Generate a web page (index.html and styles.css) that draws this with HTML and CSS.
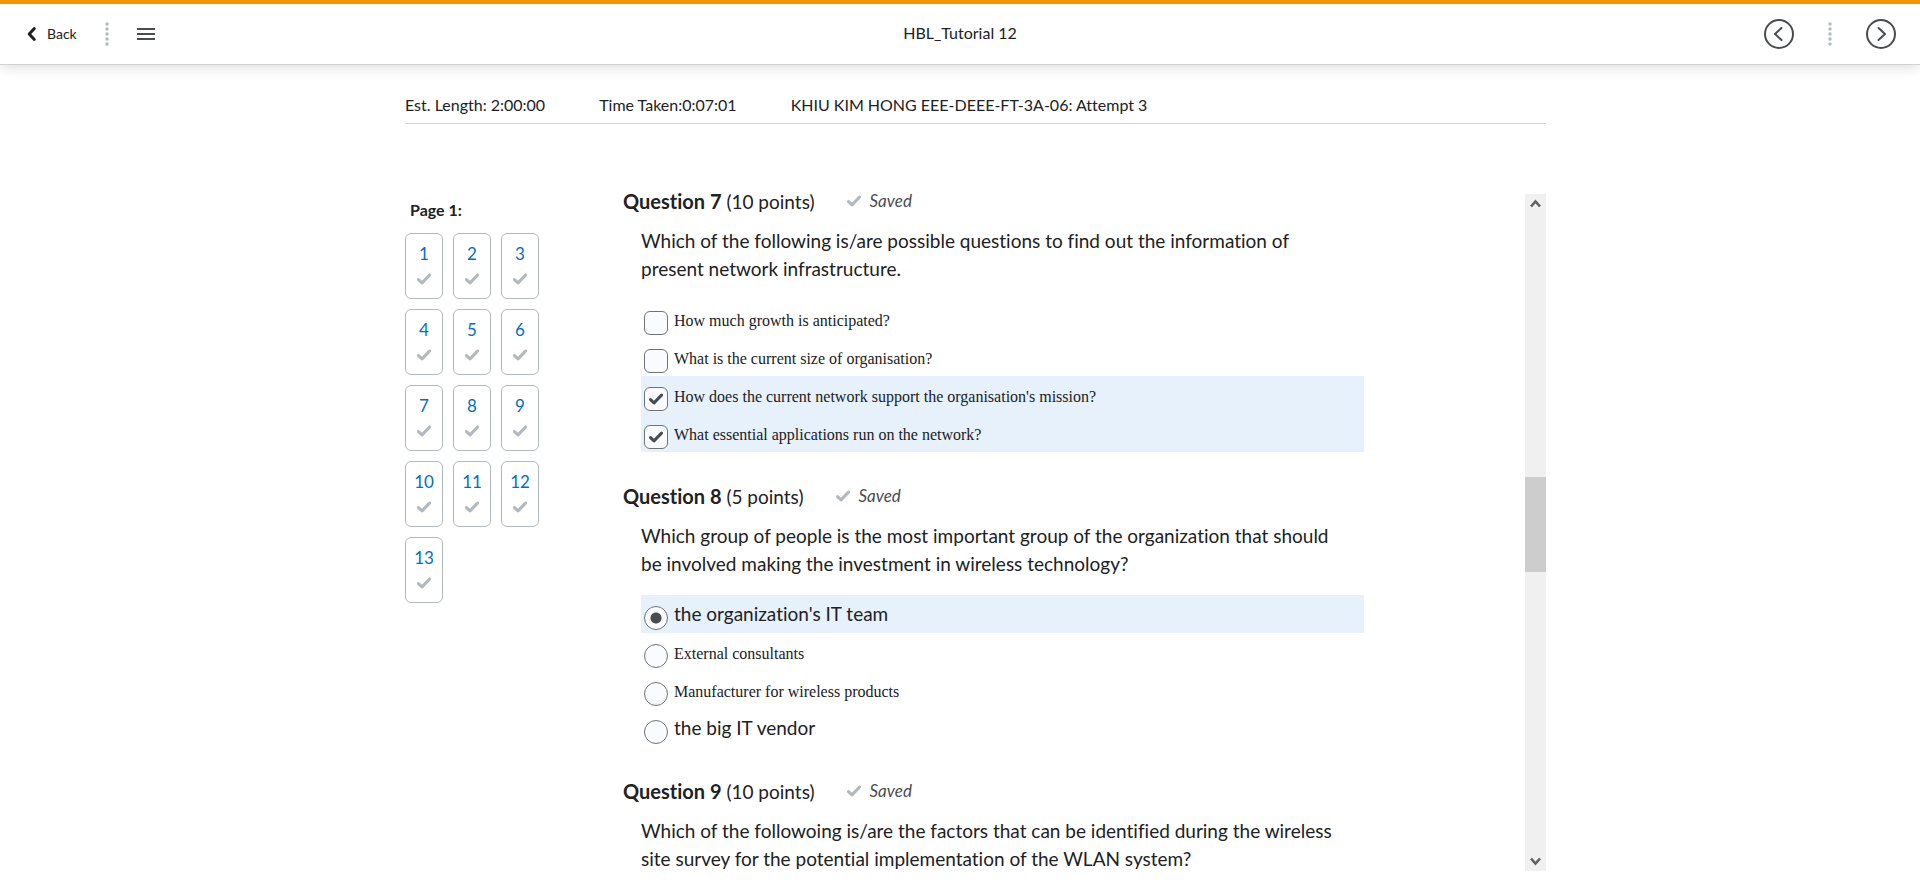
FILE: index.html
```
<!DOCTYPE html>
<html lang="en">
<head>
<meta charset="utf-8">
<title>HBL_Tutorial 12</title>
<link rel="stylesheet" href="styles.css">
</head>
<body>
<svg class="defs" aria-hidden="true">
  <symbol id="check" viewBox="0 0 14 12"><path d="M1.5 6.6 5 9.9 12.5 2.1" fill="none" stroke="currentColor" stroke-width="3" stroke-linecap="round" stroke-linejoin="round"/></symbol>
  <symbol id="dots" viewBox="0 0 4 24"><g fill="#b1b9be"><circle cx="2" cy="2" r="1.7"/><circle cx="2" cy="7" r="1.7"/><circle cx="2" cy="12" r="1.7"/><circle cx="2" cy="17" r="1.7"/><circle cx="2" cy="22" r="1.7"/></g></symbol>
</svg>
<header class="topbar">
  <div class="topbar-side">
    <a class="back" href="#"><svg width="10" height="16" viewBox="0 0 10 16"><path d="M7.300 2.500 2.200 8l5.100 5.500" fill="none" stroke="#202122" stroke-width="3" stroke-linecap="round" stroke-linejoin="round"/></svg>Back</a>
    <svg class="dots" width="4" height="24"><use href="#dots"/></svg>
    <button class="icon-button" type="button" aria-label="Menu"><svg width="18" height="18" viewBox="0 0 18 18"><path d="M0 4h18M0 9h18M0 14h18" stroke="#494c4e" stroke-width="2"/></svg></button>
  </div>
  <h1 class="title">HBL_Tutorial 12</h1>
  <div class="topbar-side topbar-right">
    <button class="icon-button" type="button" aria-label="Previous"><svg width="30" height="30" viewBox="0 0 30 30"><g fill="none" stroke="#494c4e" stroke-width="2" stroke-linecap="round" stroke-linejoin="round"><circle cx="15" cy="15" r="14"/><path d="M17.500 9 11 15l6.500 6"/></g></svg></button>
    <svg class="dots" width="4" height="24"><use href="#dots"/></svg>
    <button class="icon-button" type="button" aria-label="Next"><svg width="30" height="30" viewBox="0 0 30 30"><g fill="none" stroke="#494c4e" stroke-width="2" stroke-linecap="round" stroke-linejoin="round"><circle cx="15" cy="15" r="14"/><path d="M12.500 9 19 15l-6.500 6"/></g></svg></button>
  </div>
</header>
<main class="page">
  <div class="info"><span>Est. Length: 2:00:00</span><span>Time Taken:0:07:01</span><span>KHIU KIM HONG EEE-DEEE-FT-3A-06: Attempt 3</span></div>
  <div class="columns">
    <nav class="pager" aria-label="Questions">
      <h2 class="pager-title">Page 1:</h2>
      <div class="tiles">
        <a class="tile" href="#">1<svg class="check"><use href="#check"/></svg></a>
        <a class="tile" href="#">2<svg class="check"><use href="#check"/></svg></a>
        <a class="tile" href="#">3<svg class="check"><use href="#check"/></svg></a>
        <a class="tile" href="#">4<svg class="check"><use href="#check"/></svg></a>
        <a class="tile" href="#">5<svg class="check"><use href="#check"/></svg></a>
        <a class="tile" href="#">6<svg class="check"><use href="#check"/></svg></a>
        <a class="tile" href="#">7<svg class="check"><use href="#check"/></svg></a>
        <a class="tile" href="#">8<svg class="check"><use href="#check"/></svg></a>
        <a class="tile" href="#">9<svg class="check"><use href="#check"/></svg></a>
        <a class="tile" href="#">10<svg class="check"><use href="#check"/></svg></a>
        <a class="tile" href="#">11<svg class="check"><use href="#check"/></svg></a>
        <a class="tile" href="#">12<svg class="check"><use href="#check"/></svg></a>
        <a class="tile" href="#">13<svg class="check"><use href="#check"/></svg></a>
      </div>
    </nav>
    <div class="questions">
      <section class="question">
        <div class="question-head"><h2 class="question-title"><b>Question 7</b> (10 points)</h2><span class="saved"><svg class="check"><use href="#check"/></svg><i>Saved</i></span></div>
        <p class="prompt">Which of the following is/are possible questions to find out the information of present network infrastructure.</p>
        <div class="options">
          <label class="option serif"><input class="box" type="checkbox"><span>How much growth is anticipated?</span></label>
          <label class="option serif"><input class="box" type="checkbox"><span>What is the current size of organisation?</span></label>
          <label class="option serif chosen"><span class="control"><input class="box" type="checkbox" checked><svg class="check mark"><use href="#check"/></svg></span><span>How does the current network support the organisation's mission?</span></label>
          <label class="option serif chosen"><span class="control"><input class="box" type="checkbox" checked><svg class="check mark"><use href="#check"/></svg></span><span>What essential applications run on the network?</span></label>
        </div>
      </section>
      <section class="question">
        <div class="question-head"><h2 class="question-title"><b>Question 8</b> (5 points)</h2><span class="saved"><svg class="check"><use href="#check"/></svg><i>Saved</i></span></div>
        <p class="prompt">Which group of people is the most important group of the organization that should be involved making the investment in wireless technology?</p>
        <div class="options">
          <label class="option chosen"><input class="box radio" type="radio" name="q8" checked><span>the organization's IT team</span></label>
          <label class="option serif"><input class="box radio" type="radio" name="q8"><span>External consultants</span></label>
          <label class="option serif"><input class="box radio" type="radio" name="q8"><span>Manufacturer for wireless products</span></label>
          <label class="option"><input class="box radio" type="radio" name="q8"><span>the big IT vendor</span></label>
        </div>
      </section>
      <section class="question">
        <div class="question-head"><h2 class="question-title"><b>Question 9</b> (10 points)</h2><span class="saved"><svg class="check"><use href="#check"/></svg><i>Saved</i></span></div>
        <p class="prompt">Which of the followoing is/are the factors that can be identified during the wireless site survey for the potential implementation of the WLAN system?</p>
      </section>
    </div>
    <div class="scrollbar">
      <button class="icon-button" type="button" aria-label="Scroll up"><svg width="21" height="21" viewBox="0 0 21 21"><path d="M6 12.500 10.500 7.500 15 12.500" fill="none" stroke="#606060" stroke-width="2.600"/></svg></button>
      <div class="track"><div class="thumb"></div></div>
      <button class="icon-button" type="button" aria-label="Scroll down"><svg width="21" height="21" viewBox="0 0 21 21"><path d="M6 8.500 10.500 13.500 15 8.500" fill="none" stroke="#606060" stroke-width="2.600"/></svg></button>
    </div>
  </div>
</main>
</body>
</html>
```
FILE: styles.css
```
* { box-sizing: border-box; }
body {
  margin: 0;
  height: 100vh;
  display: flex;
  flex-direction: column;
  overflow: hidden;
  background: #fff;
  color: #202122;
  font: 19px/28px Lato, "Liberation Sans", sans-serif;
  font-variant-ligatures: none;
}
h1, h2, p { margin: 0; font-weight: 400; }
a { color: inherit; text-decoration: none; }
.defs { position: absolute; width: 0; height: 0; }

.topbar {
  display: flex;
  align-items: center;
  flex: none;
  height: 65px;
  padding: 0 24px;
  border-top: 4px solid #f59300;
  border-bottom: 1px solid #d0d2d3;
  box-shadow: 0 2px 12px rgba(0, 0, 0, .14);
}
.topbar-side { display: flex; align-items: center; flex: 1; }
.topbar-right { justify-content: flex-end; gap: 34px; }
.back { display: flex; align-items: center; gap: 10px; padding-left: 3px; font-size: 14px; }
.topbar-side .dots { margin: 0 28px; }
.topbar-right .dots { margin: 0; }
.title { padding-bottom: 2px; font-size: 16px; }
.icon-button { display: flex; padding: 0; border: 0; background: none; }

.page {
  display: flex;
  flex-direction: column;
  flex: 1;
  min-height: 0;
  width: 100%;
  max-width: 1172px;
  margin: 0 auto;
  padding: 26px 0 18px 31px;
}
.info {
  display: flex;
  gap: 54px;
  padding-bottom: 4px;
  border-bottom: 1px solid #cdd5dc;
  font-size: 16px;
}
.columns { display: flex; flex: 1; min-height: 0; padding-top: 62px; }
.pager { flex: none; width: 218px; padding-top: 10px; }
.pager-title { padding: 0 5px 9px; font-size: 16px; font-weight: 700; }
.tiles { display: grid; grid-template-columns: repeat(3, 38px); gap: 10px; }
.tile {
  display: flex;
  flex-direction: column;
  align-items: center;
  height: 66px;
  padding-top: 6px;
  border: 1px solid #b1b9be;
  border-radius: 6px;
  color: #006fbf;
  font-size: 17px;
}
.check { width: 14px; height: 12px; color: #b1b9be; }
.tile .check { margin-top: 5px; }

.questions { flex: 1; overflow: hidden; padding-right: 161px; }
.question { padding-bottom: 29px; }
.question-head { display: flex; align-items: center; gap: 32px; height: 30px; margin-bottom: 11px; }
.question-title { font-size: 19px; }
.question-title b { font-size: 20px; }
.saved { display: flex; align-items: center; gap: 9px; color: #494c4e; font-size: 17px; }
.prompt { padding: 0 20px 0 18px; }
.options { margin: 17px 0 0 18px; }
.option { display: flex; align-items: flex-start; gap: 6px; height: 38px; padding: 5px 3px 0; }
.serif { font: 16px/32px "Liberation Serif", serif; }
.chosen { background: #e6f1fc; }
.control { position: relative; display: flex; }
.box {
  appearance: none;
  flex: none;
  width: 24px;
  height: 24px;
  margin: 6px 0 0;
  border: 1px solid #6e7376;
  border-radius: 6px;
  background: #f9fbff;
}
.radio { border-radius: 50%; }
.radio:checked { background: radial-gradient(circle, #494c4e 5px, #f9fbff 6px); }
.mark { position: absolute; left: 5px; top: 12px; color: #494c4e; }

.scrollbar { display: flex; flex-direction: column; flex: none; width: 21px; margin-top: 8px; background: #f0f0f0; }
.track { flex: 1; padding-top: 262px; }
.thumb { height: 95px; background: #cdcdcd; }
```
